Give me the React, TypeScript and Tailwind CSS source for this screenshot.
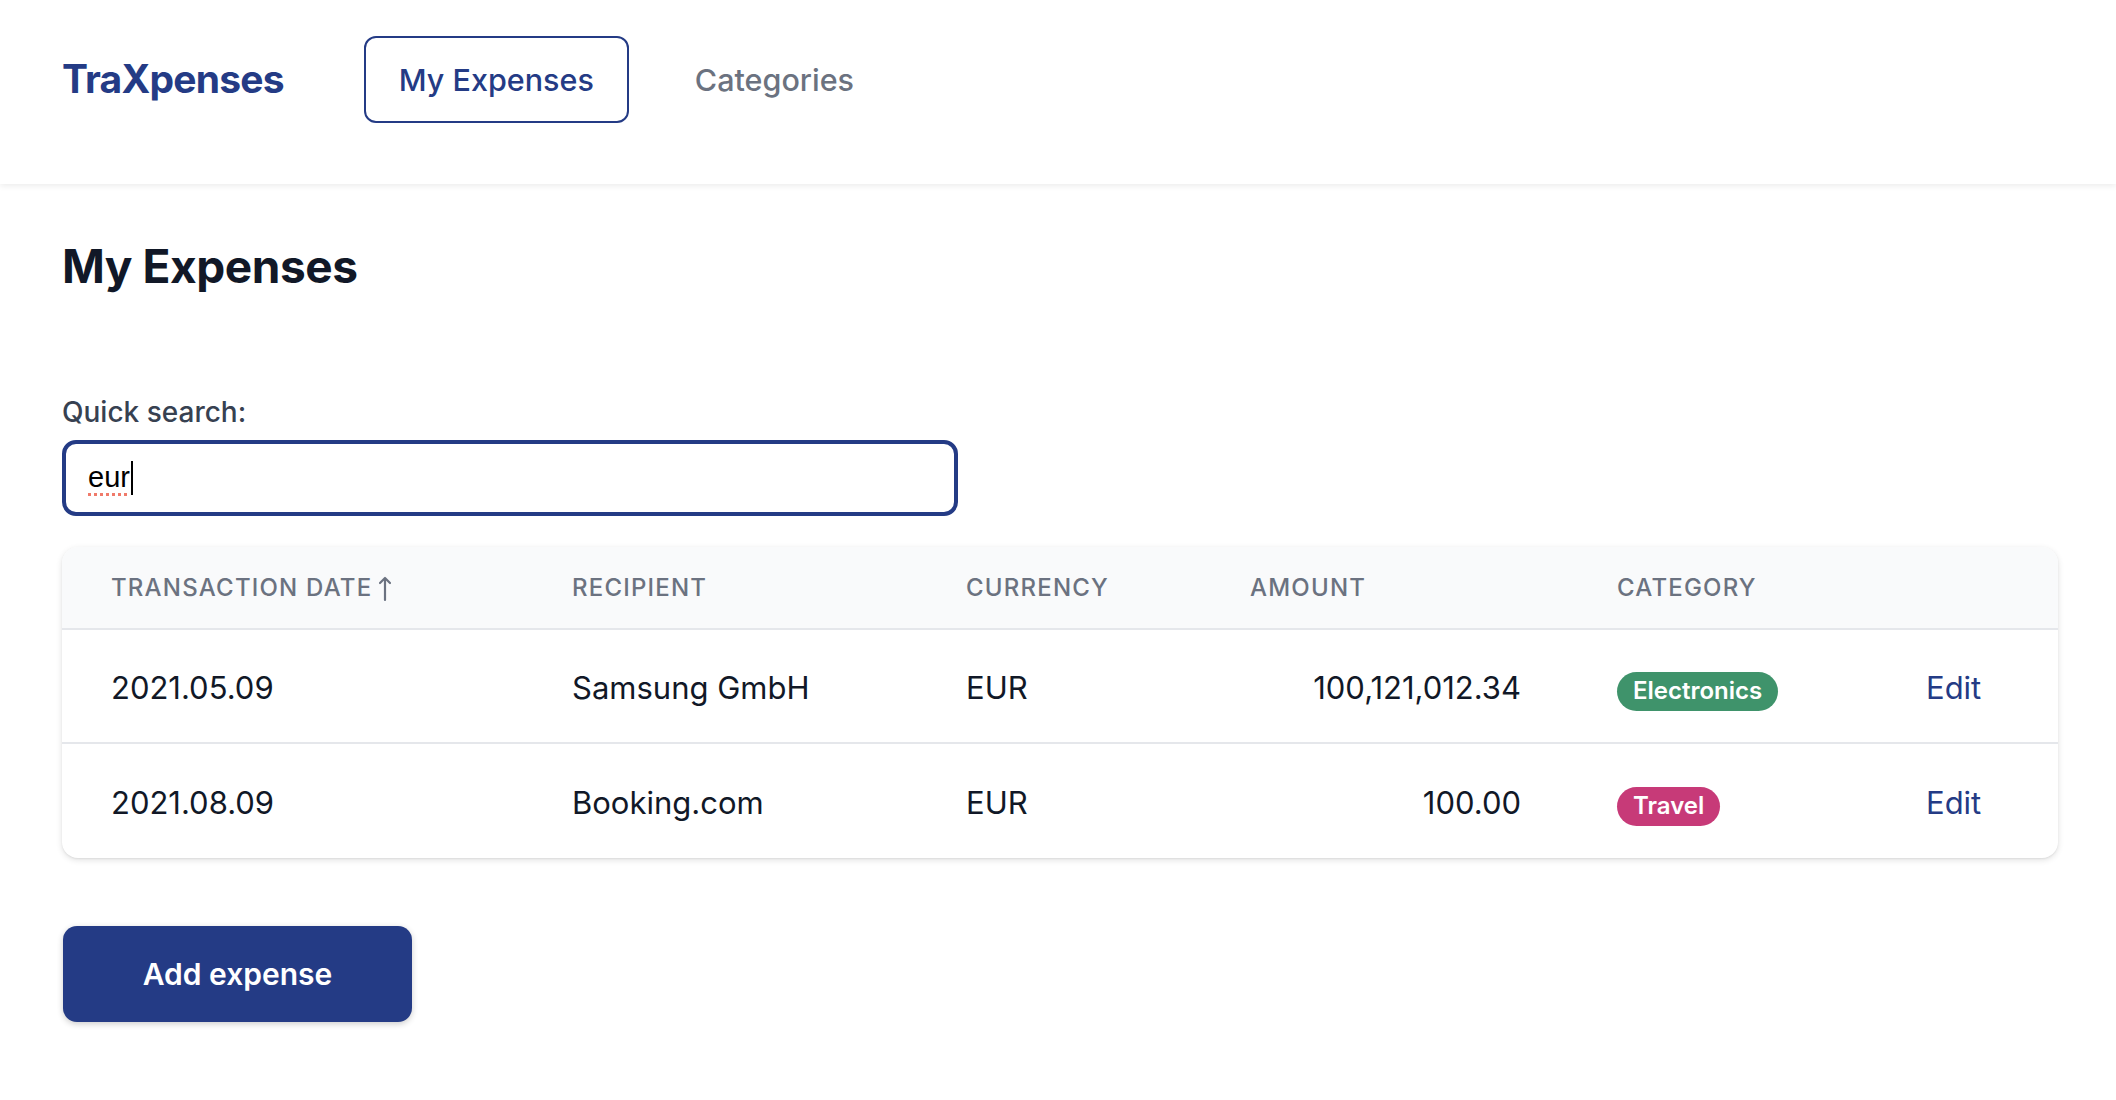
import React from "react";

const rows = [
  { date: "2021.05.09", recipient: "Samsung GmbH", currency: "EUR", amount: "100,121,012.34", cat: "Electronics", catClass: "bg-[#3f936b]" },
  { date: "2021.08.09", recipient: "Booking.com", currency: "EUR", amount: "100.00", cat: "Travel", catClass: "bg-[#c73a78]" },
];

export default function App() {
  return (
    <div className="min-h-screen bg-white font-['Inter',sans-serif] text-[#111827]">
      <header className="h-[184px] pt-[36px] px-[62px] shadow-[0_2px_6px_rgba(0,0,0,0.08)] flex items-start">
        <div className="h-[87px] flex items-center text-[39px] font-bold tracking-[-0.02em] text-[#243b85] mr-[80px]">
          TraXpenses
        </div>
        <nav className="flex items-center gap-[31px]">
          <a className="h-[87px] px-[33px] flex items-center border-2 border-[#243b85] rounded-[12px] text-[30.5px] font-medium text-[#243b85]">
            My Expenses
          </a>
          <a className="h-[87px] px-[33px] flex items-center border-2 border-transparent rounded-[12px] text-[30.5px] font-medium text-[#6b7280]">
            Categories
          </a>
        </nav>
      </header>

      <main className="px-[62px] pt-[50px]">
        <h1 className="text-[46px] leading-[64px] font-bold tracking-[-0.01em] text-[#111827]">My Expenses</h1>

        <label className="block mt-[94px] text-[28px] leading-[40px] font-medium text-[#374151]">Quick search:</label>
        <div className="mt-[8px] w-[896px] h-[76px] border-[4px] border-[#243b85] rounded-[14px] flex items-center pl-[22px]">
          <span className="font-['Liberation_Sans',sans-serif] text-[29px] text-black underline decoration-dotted decoration-[#f07a6a] decoration-[3px] underline-offset-[6px]">
            eur
          </span>
          <span className="w-[2px] h-[34px] bg-black ml-[1px]" />
        </div>

        <div className="mt-[31px] w-[1996px] rounded-[16px] overflow-hidden bg-white shadow-[0_2px_6px_rgba(0,0,0,0.12),0_1px_2px_rgba(0,0,0,0.06)]">
          <div className="grid grid-cols-[462px_394px_284px_367px_310px_1fr] h-[83px] items-center bg-[#f9fafb] border-b-2 border-[#e5e7eb] text-[24px] font-medium tracking-[0.05em] text-[#6b7280] uppercase">
            <div className="pl-[49px] flex items-center">
              Transaction Date
              <svg width="14" height="26" viewBox="0 0 14 26" className="ml-[6px] mt-[2px]" fill="none" stroke="#6b7280" strokeWidth="2.2" strokeLinecap="round" strokeLinejoin="round">
                <path d="M7 24V2M2 7l5-5 5 5" />
              </svg>
            </div>
            <div className="pl-[48px]">Recipient</div>
            <div className="pl-[48px]">Currency</div>
            <div className="pl-[48px]">Amount</div>
            <div className="pl-[48px]">Category</div>
            <div />
          </div>
          {rows.map((r, i) => (
            <div
              key={r.date}
              className={
                "grid grid-cols-[462px_394px_284px_367px_310px_1fr] h-[114px] pt-[5px] items-center text-[31px] text-[#111827] " +
                (i === 0 ? "border-b-2 border-[#e5e7eb]" : "")
              }
            >
              <div className="pl-[49px]">{r.date}</div>
              <div className="pl-[48px]">{r.recipient}</div>
              <div className="pl-[48px]">{r.currency}</div>
              <div className="pr-[48px] text-right">{r.amount}</div>
              <div className="pl-[48px]">
                <span className={"inline-flex items-center h-[39px] px-[16px] rounded-full text-[24px] font-semibold text-white " + r.catClass}>
                  {r.cat}
                </span>
              </div>
              <div className="pl-[47px]">
                <a className="text-[#243b85] text-[31px]">Edit</a>
              </div>
            </div>
          ))}
        </div>

        <button className="mt-[68px] ml-[1px] w-[349px] h-[96px] rounded-[14px] bg-[#243b85] text-white text-[30px] font-semibold shadow-[0_2px_6px_rgba(0,0,0,0.2)]">
          Add expense
        </button>
      </main>
    </div>
  );
}
